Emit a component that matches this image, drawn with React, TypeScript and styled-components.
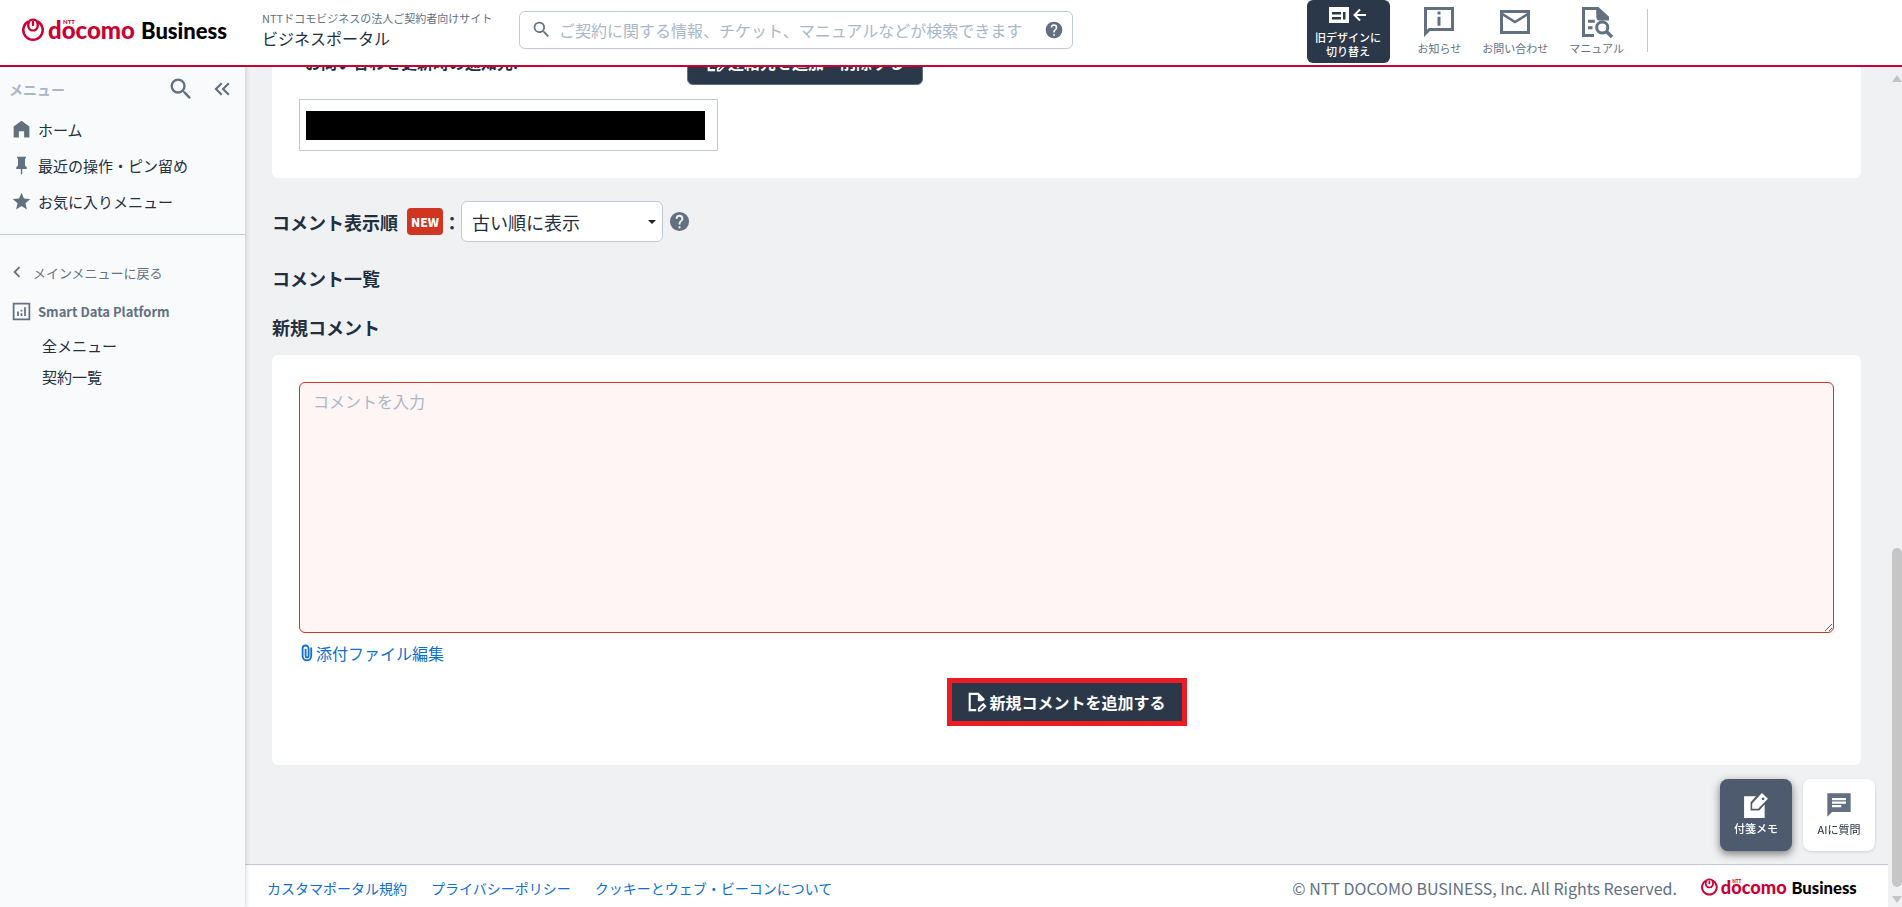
import React from "react";
import styled, { createGlobalStyle } from "styled-components";

const color = {
  ink: "#222f3e",
  navy: "#2b384a",
  slate: "#627082",
  pale: "#a9b7c8",
  line: "#c0cad8",
  link: "#0c6fd1",
  brand: "#cc0033",
  danger: "#cf3521",
  page: "#f0f1f3",
};

const GlobalStyle = createGlobalStyle`
  *, *::before, *::after { box-sizing: border-box; }
  body {
    margin: 0;
    font-family: "Noto Sans CJK JP", "Noto Sans", sans-serif;
    font-size: 16px;
    color: ${color.ink};
    background: ${color.page};
  }
  button, input, select, textarea { font: inherit; color: inherit; margin: 0; }
  h2, p, ul { margin: 0; padding: 0; }
  ul { list-style: none; }
  svg { display: block; flex: none; }
`;

/* ---------- icons ---------- */

const Glyph = styled.svg.attrs({ viewBox: "0 0 24 24", "aria-hidden": true })<{ $size: number }>`
  width: ${(p) => p.$size}px;
  height: ${(p) => p.$size}px;
  fill: currentColor;
`;

const paths = {
  search:
    "M15.5 14h-.79l-.28-.27A6.47 6.47 0 0 0 16 9.5 6.5 6.5 0 1 0 9.5 16c1.61 0 3.09-.59 4.23-1.57l.27.28v.79l5 4.99L20.49 19l-4.99-5zm-6 0a4.5 4.5 0 1 1 0-9 4.5 4.5 0 0 1 0 9z",
  help:
    "M12 2a10 10 0 1 0 0 20 10 10 0 0 0 0-20zm1 17h-2v-2h2v2zm2.07-7.75-.9.92C13.45 12.9 13 13.5 13 15h-2v-.5c0-1.1.45-2.1 1.17-2.83l1.24-1.26c.37-.36.59-.86.59-1.41a2 2 0 1 0-4 0H8a4 4 0 1 1 8 0c0 .88-.36 1.68-.93 2.25z",
  info: "M2 2v20l4-4h16V2H2zm18 14H5.2L4 17.2V4h16v12zM11 5h2v2h-2zM11 8.500h2v6h-2z",
  mail: "M22 4H2v16h20V4zm-2 14H4V8l8 5 8-5v10zm-8-7L4 6h16l-8 5z",
  home: "M12 2 3 8.500V21h6v-7h6v7h6V8.500z",
  pin: "M17 4V2H7v2h1v8l-2 2v2h5.200v6h1.600v-6H18v-2l-2-2V4z",
  star: "m12 17.270 6.180 3.730-1.640-7.030L22 9.240l-7.190-.61L12 2 9.190 8.630 2 9.240l5.460 4.730L5.820 21z",
  back: "M15.410 7.410 14 6l-6 6 6 6 1.410-1.410L10.830 12z",
  collapse:
    "M17.590 18 19 16.590 14.420 12 19 7.410 17.590 6l-6 6zM11 18l1.410-1.410L7.830 12l4.580-4.590L11 6l-6 6z",
  chart: "M2 2v20h20V2H2zm18 18H4V4h16v16zM7 12h2v5H7zM11 14h2v3h-2zM11 10h2v2h-2zM15 7h2v10h-2z",
  chat: "M2 2v20l4-4h16V2H2zm4 4h12v2H6zm0 3h12v2H6zm0 3h8v2H6z",
};

const Icon = ({ name, size }: { name: keyof typeof paths; size: number }) => (
  <Glyph $size={size}>
    <path d={paths[name]} fillRule={name === "chat" ? "evenodd" : undefined} />
  </Glyph>
);

const ManualIcon = () => (
  <Glyph $size={36}>
    <path d="M2 2h11l7 6.500V11h-7.500L11.500 9V4H4v16h6v2H2z" />
    <path d="M6 10.500h4.500v2H6zM6 14.800h3v2H6z" />
    <circle cx="15.500" cy="15.700" r="3.700" fill="none" stroke="currentColor" strokeWidth="2" />
    <path d="m18 18 4 4" stroke="currentColor" strokeWidth="2.200" />
  </Glyph>
);

const NoteEditIcon = () => (
  <Glyph $size={20}>
    <path d="M2 1h12l7 7v2l-3 1h-5V3.500H4.500v17H11V23H2z" />
    <path
      d="M13 23.500v-4l6.500-6.500L23.500 17l-6.500 6.500zM15 21.700h1.200l4-4-1.200-1.200-4 4z"
      fillRule="evenodd"
    />
  </Glyph>
);

const MemoIcon = () => (
  <Glyph $size={26}>
    <path d="M1 4h11L7 9.500V17h8l5-5.500V24H1z" />
    <path
      d="M8.500 10.500 17.500 1 23 6.300 14 15.500H8.500zM18.500 5a1.200 1.200 0 1 0 .1 0z"
      fillRule="evenodd"
    />
  </Glyph>
);

const ClipIcon = () => (
  <svg width="12" height="18" viewBox="0 0 12 18" fill="none" stroke="currentColor" aria-hidden="true">
    <path
      d="M10.200 3.500v8.500a4.300 4.300 0 0 1-8.600 0V4.500a3 3 0 0 1 6 0v7.500a1.500 1.500 0 0 1-3 0V5"
      strokeWidth="1.800"
    />
  </svg>
);

const SwitchIcon = () => (
  <svg width="38" height="16" viewBox="0 0 38 16" aria-hidden="true">
    <path
      d="M0 0h20v16H0zM3 5v2.500h9V5zM3 10v2.500h9V10zM14 5v7.500h2.500V5z"
      fill="#fff"
      fillRule="evenodd"
    />
    <path d="M31 2.500 25.500 8l5.500 5.500M26 8h11" fill="none" stroke="#fff" strokeWidth="2" />
  </svg>
);

/* ---------- brand ---------- */

const LogoSvg = styled.svg<{ $width: number }>`
  width: ${(p) => p.$width}px;
  height: auto;
  font-family: "Lato", sans-serif;
  font-weight: 900;
`;

const Logo = ({ width }: { width: number }) => (
  <LogoSvg $width={width} viewBox="0 -4 208 32" role="img" aria-label="NTT docomo Business">
    <g fill="none" stroke={color.brand}>
      <path d="M6.500 3.500a9.700 9.700 0 1 0 9 0" strokeWidth="2.600" />
      <path
        d="M7.500 2.600C4.500 8 7 12.500 11 12.500S17.500 8 14.500 2.600Q11 .6 7.500 2.600"
        strokeWidth="2.200"
      />
      <path d="M11 3v5" strokeWidth="2.200" />
    </g>
    <text x="26" y="21" fontSize="24" fill={color.brand}>docomo</text>
    <text x="41" y="6" fontSize="6" fill={color.brand}>NTT</text>
    <text x="119" y="21" fontSize="22" fill="#000">Business</text>
  </LogoSvg>
);

/* ---------- header ---------- */

const Page = styled.div`
  display: flex;
  flex-direction: column;
  height: 100vh;
  overflow: hidden;
`;

const Header = styled.header`
  display: flex;
  flex: none;
  height: 67px;
  padding-left: 22px;
  background: #fff;
  border-bottom: 2px solid ${color.brand};
`;

const Brand = styled.a`
  display: flex;
  align-items: flex-start;
  width: 240px;
  padding-top: 14px;
`;

const SiteName = styled.div`
  width: 257px;
  padding-top: 10px;
  white-space: nowrap;
`;

const SiteNote = styled.p`
  font-size: 11px;
  line-height: 17px;
  color: ${color.slate};
`;

const SiteTitle = styled.p`
  font-size: 16px;
  line-height: 22px;
`;

const SearchBox = styled.label`
  display: flex;
  align-items: center;
  width: 554px;
  height: 38px;
  margin-top: 11px;
  padding: 0 8px 1px 11px;
  gap: 7px;
  border: 1px solid ${color.line};
  border-radius: 6px;
  color: ${color.slate};
`;

const SearchInput = styled.input`
  flex: 1;
  min-width: 0;
  padding: 0;
  border: 0;
  outline: 0;
  background: none;
  line-height: 24px;
  &::placeholder { color: ${color.pale}; opacity: 1; }
`;

const IconButton = styled.button`
  display: flex;
  align-items: center;
  justify-content: center;
  padding: 0;
  border: 0;
  background: none;
  color: ${color.slate};
`;

const Tools = styled.nav`
  display: flex;
  margin-left: auto;
  margin-right: 254px;
`;

const SwitchButton = styled.button`
  display: flex;
  flex-direction: column;
  align-items: center;
  width: 83px;
  height: 63px;
  padding: 7px 0 0;
  gap: 7px;
  border: 0;
  border-radius: 6px;
  background: ${color.navy};
  color: #fff;
  font-size: 11px;
  font-weight: 500;
  line-height: 14px;
`;

const ToolList = styled.ul`
  display: flex;
  gap: 21px;
  margin-left: 28px;
`;

const ToolLink = styled.a`
  display: flex;
  flex-direction: column;
  align-items: center;
  padding-top: 4px;
  font-size: 11px;
  line-height: 16px;
  color: ${color.slate};
  text-decoration: none;
  white-space: nowrap;
`;

const Divider = styled.div`
  width: 1px;
  height: 43px;
  margin: 9px 0 0 23px;
  background: ${color.line};
`;

/* ---------- sidebar ---------- */

const Body = styled.div`
  display: flex;
  flex: 1;
  min-height: 0;
`;

const Sidebar = styled.aside`
  position: relative;
  flex: none;
  width: 245px;
  background: #f9fafc;
  box-shadow: 1px 0 4px rgba(40, 50, 70, 0.2);
`;

const SidebarHead = styled.div`
  display: flex;
  align-items: center;
  gap: 14px;
  height: 44px;
  padding: 0 10px 0 9px;
  font-size: 14px;
  font-weight: 700;
  color: ${color.pale};
`;

const SidebarTitle = styled.span`
  flex: 1;
`;

const NavList = styled.ul`
  padding-bottom: 15px;
  border-bottom: 1px solid ${color.line};
`;

const NavLink = styled.a`
  display: flex;
  align-items: center;
  gap: 6px;
  height: 36px;
  padding-left: 11px;
  font-size: 15px;
  color: ${color.ink};
  text-decoration: none;
  svg { color: ${color.slate}; }
`;

const BackLink = styled.a`
  display: flex;
  align-items: center;
  gap: 5px;
  height: 40px;
  margin-top: 17px;
  padding-left: 6px;
  font-size: 13px;
  color: ${color.slate};
  text-decoration: none;
`;

const SectionTitle = styled.h2`
  display: flex;
  align-items: center;
  gap: 6px;
  height: 38px;
  padding-left: 11px;
  font-size: 13px;
  font-weight: 700;
  color: ${color.slate};
`;

const SubLink = styled.a`
  display: flex;
  align-items: center;
  height: 31px;
  padding: 0 42px;
  font-size: 15px;
  color: ${color.ink};
  text-decoration: none;
`;

/* ---------- main ---------- */

const Main = styled.main`
  display: flex;
  flex: 1;
  flex-direction: column;
  min-width: 0;
`;

/* Pinned to its lower end, so the earlier part of the ticket runs up under the header. */
const Thread = styled.div`
  display: flex;
  flex: 1;
  flex-direction: column;
  justify-content: flex-end;
  min-height: 0;
  padding: 0 27px 99px;
  overflow: hidden;
`;

const Card = styled.section`
  flex: none;
  padding: 27px;
  border-radius: 6px;
  background: #fff;
`;

const ContactHead = styled.div`
  display: flex;
  align-items: center;
  margin-bottom: 14px;
`;

const ContactLabel = styled.h2`
  width: 388px;
  padding-left: 6px;
  font-size: 16px;
  font-weight: 700;
  line-height: 24px;
`;

const PrimaryButton = styled.button<{ $marked?: boolean }>`
  display: flex;
  align-items: center;
  justify-content: center;
  gap: 2px;
  width: ${(p) => (p.$marked ? 240 : 236)}px;
  height: ${(p) => (p.$marked ? 48 : 46)}px;
  padding: 0;
  border: ${(p) => (p.$marked ? "5px solid #ed1c24" : `1px solid ${color.slate}`)};
  border-radius: ${(p) => (p.$marked ? 0 : 6)}px;
  background: ${color.navy};
  color: #fff;
  font-size: 16px;
  font-weight: 700;
`;

const AddressBox = styled.div`
  display: flex;
  align-items: center;
  width: 419px;
  height: 52px;
  padding-left: 6px;
  border: 1px solid ${color.line};
`;

const Redacted = styled.div`
  width: 399px;
  height: 29px;
  background: #000;
`;

const OrderRow = styled.div`
  display: flex;
  flex: none;
  align-items: center;
  margin-top: 23px;
  font-size: 18px;
  font-weight: 700;
  line-height: 24px;
`;

const NewBadge = styled.span`
  width: 36px;
  margin-left: 9px;
  border-radius: 4px;
  background: ${color.danger};
  color: #fff;
  font-size: 12px;
  font-weight: 900;
  line-height: 27px;
  text-align: center;
`;

const SelectWrap = styled.div`
  display: grid;
  align-items: center;
  width: 202px;
  margin-right: 5px;
  > * { grid-area: 1 / 1; }
`;

const OrderSelect = styled.select`
  width: 100%;
  height: 41px;
  padding: 0 28px 0 10px;
  appearance: none;
  border: 1px solid ${color.line};
  border-radius: 6px;
  background: #fff;
  font-weight: 400;
`;

const Caret = styled.span`
  justify-self: end;
  margin-right: 7px;
  border: 4px solid transparent;
  border-top-color: #222;
  border-bottom-width: 0;
  pointer-events: none;
`;

const Heading = styled.h2`
  flex: none;
  margin-top: 23px;
  font-size: 18px;
  font-weight: 700;
  line-height: 26px;
`;

const CommentCard = styled(Card)`
  margin-top: 15px;
  padding-bottom: 39px;
`;

const CommentInput = styled.textarea`
  display: block;
  width: 100%;
  height: 251px;
  padding: 6px 13px;
  border: 1px solid ${color.danger};
  border-radius: 6px;
  outline: 0;
  background: #fff5f4;
  line-height: 24px;
  resize: vertical;
  &::placeholder { color: ${color.pale}; opacity: 1; }
`;

const AttachLink = styled.a`
  display: inline-flex;
  align-items: center;
  gap: 3px;
  margin: 8px 0 13px 2px;
  line-height: 24px;
  color: ${color.link};
  text-decoration: none;
`;

const SubmitRow = styled.div`
  display: flex;
  justify-content: center;
`;

const Footer = styled.footer`
  display: flex;
  flex: none;
  align-items: center;
  gap: 24px;
  height: 43px;
  padding: 3px 29px 0 22px;
  border-top: 1px solid ${color.line};
  background: #fff;
  white-space: nowrap;
`;

const FooterLink = styled.a`
  font-size: 14px;
  color: ${color.link};
  text-decoration: none;
`;

const Copyright = styled.p`
  margin-left: auto;
  line-height: 24px;
  color: ${color.slate};
`;

const ScrollTrack = styled.div`
  display: flex;
  flex: none;
  flex-direction: column;
  align-items: center;
  width: 14px;
  padding: 8px 0 4px 4px;
`;

const ScrollArrow = styled.span<{ $down?: boolean }>`
  border: 5px solid transparent;
  border-top: ${(p) => (p.$down ? "7px solid #c4c4c4" : "0")};
  border-bottom: ${(p) => (p.$down ? "0" : "7px solid #c4c4c4")};
`;

const ScrollThumb = styled.div`
  width: 10px;
  height: 41%;
  margin: auto 0 9px;
  border-radius: 5px;
  background: #c6c6c6;
`;

const FloatingTools = styled.div`
  position: fixed;
  right: 27px;
  bottom: 56px;
  display: flex;
  gap: 11px;
`;

const FloatingButton = styled.button<{ $dark?: boolean }>`
  display: flex;
  flex-direction: column;
  align-items: center;
  justify-content: center;
  gap: 2px;
  width: 72px;
  height: 72px;
  padding: 0 0 2px;
  border: 0;
  border-radius: 8px;
  background: ${(p) => (p.$dark ? "#4e5b6e" : "#fff")};
  box-shadow: ${(p) => (p.$dark ? "0 3px 8px rgba(0, 0, 0, 0.5)" : "0 1px 3px rgba(0, 0, 0, 0.15)")};
  color: ${(p) => (p.$dark ? "#fff" : color.ink)};
  font-size: 11px;
  font-weight: ${(p) => (p.$dark ? 500 : 400)};
  line-height: 16px;
  svg { color: ${(p) => (p.$dark ? "#fff" : color.slate)}; }
`;

const mainNav = [
  { icon: "home", label: "ホーム" },
  { icon: "pin", label: "最近の操作・ピン留め" },
  { icon: "star", label: "お気に入りメニュー" },
] as const;

const footerLinks = ["カスタマポータル規約", "プライバシーポリシー", "クッキーとウェブ・ビーコンについて"];

export default function App() {
  return (
    <Page>
      <GlobalStyle />
      <Header>
        <Brand href="#">
          <Logo width={208} />
        </Brand>
        <SiteName>
          <SiteNote>NTTドコモビジネスの法人ご契約者向けサイト</SiteNote>
          <SiteTitle>ビジネスポータル</SiteTitle>
        </SiteName>
        <SearchBox>
          <Icon name="search" size={21} />
          <SearchInput
            type="search"
            aria-label="サイト内検索"
            placeholder="ご契約に関する情報、チケット、マニュアルなどが検索できます"
          />
          <Icon name="help" size={20} />
        </SearchBox>
        <Tools>
          <SwitchButton type="button">
            <SwitchIcon />
            <span>
              旧デザインに
              <br />
              切り替え
            </span>
          </SwitchButton>
          <ToolList>
            <li>
              <ToolLink href="#">
                <Icon name="info" size={36} />
                お知らせ
              </ToolLink>
            </li>
            <li>
              <ToolLink href="#">
                <Icon name="mail" size={36} />
                お問い合わせ
              </ToolLink>
            </li>
            <li>
              <ToolLink href="#">
                <ManualIcon />
                マニュアル
              </ToolLink>
            </li>
          </ToolList>
          <Divider />
        </Tools>
      </Header>

      <Body>
        <Sidebar>
          <SidebarHead>
            <SidebarTitle>メニュー</SidebarTitle>
            <IconButton type="button" aria-label="メニューを検索">
              <Icon name="search" size={28} />
            </IconButton>
            <IconButton type="button" aria-label="メニューを閉じる">
              <Icon name="collapse" size={26} />
            </IconButton>
          </SidebarHead>
          <NavList>
            {mainNav.map((item) => (
              <li key={item.label}>
                <NavLink href="#">
                  <Icon name={item.icon} size={21} />
                  {item.label}
                </NavLink>
              </li>
            ))}
          </NavList>
          <BackLink href="#">
            <Icon name="back" size={22} />
            メインメニューに戻る
          </BackLink>
          <SectionTitle>
            <Icon name="chart" size={21} />
            Smart Data Platform
          </SectionTitle>
          <ul>
            <li>
              <SubLink href="#">全メニュー</SubLink>
            </li>
            <li>
              <SubLink href="#">契約一覧</SubLink>
            </li>
          </ul>
        </Sidebar>

        <Main>
          <Thread>
            <Card>
              <ContactHead>
                <ContactLabel>お問い合わせ更新時の通知先:</ContactLabel>
                <PrimaryButton type="button">
                  <NoteEditIcon />
                  連絡先を追加・削除する
                </PrimaryButton>
              </ContactHead>
              <AddressBox>
                <Redacted />
              </AddressBox>
            </Card>

            <OrderRow>
              <label htmlFor="order">コメント表示順</label>
              <NewBadge>NEW</NewBadge>：
              <SelectWrap>
                <OrderSelect id="order" defaultValue="old">
                  <option value="old">古い順に表示</option>
                  <option value="new">新しい順に表示</option>
                </OrderSelect>
                <Caret />
              </SelectWrap>
              <IconButton type="button" aria-label="ヘルプ">
                <Icon name="help" size={23} />
              </IconButton>
            </OrderRow>

            <Heading>コメント一覧</Heading>
            <Heading>新規コメント</Heading>

            <CommentCard>
              <CommentInput aria-label="新規コメント" placeholder="コメントを入力" />
              <AttachLink href="#">
                <ClipIcon />
                添付ファイル編集
              </AttachLink>
              <SubmitRow>
                <PrimaryButton type="button" $marked>
                  <NoteEditIcon />
                  新規コメントを追加する
                </PrimaryButton>
              </SubmitRow>
            </CommentCard>
          </Thread>

          <Footer>
            {footerLinks.map((label) => (
              <FooterLink key={label} href="#">
                {label}
              </FooterLink>
            ))}
            <Copyright>© NTT DOCOMO BUSINESS, Inc. All Rights Reserved.</Copyright>
            <Logo width={158} />
          </Footer>
        </Main>

        <ScrollTrack aria-hidden="true">
          <ScrollArrow />
          <ScrollThumb />
          <ScrollArrow $down />
        </ScrollTrack>
      </Body>

      <FloatingTools>
        <FloatingButton type="button" $dark>
          <MemoIcon />
          付箋メモ
        </FloatingButton>
        <FloatingButton type="button">
          <Icon name="chat" size={28} />
          AIに質問
        </FloatingButton>
      </FloatingTools>
    </Page>
  );
}
